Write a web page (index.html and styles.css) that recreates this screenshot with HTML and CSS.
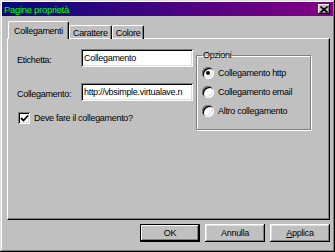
FILE: index.html
```html
<!DOCTYPE html>
<html lang="it">
	<head>
		<title>Pagine proprietà</title>
		<link rel="stylesheet" href="styles.css">
	</head>
	<body>
		<div class="window">
			<div class="titlebar">
				<span class="title">Pagine proprietà</span>
				<span class="close">
					<svg width="8" height="7" viewBox="0 0 8 7"><path d="M0.5 0.5 L7.5 6.5 M7.5 0.5 L0.5 6.5" stroke="#000" stroke-width="1.6" fill="none"/></svg>
				</span>
			</div>
			<div class="content">
				<div class="tabs">
					<div class="tab active">Collegamenti</div>
					<div class="tab">Carattere</div>
					<div class="tab">Colore</div>
				</div>
				<div class="panel">
					<div class="fields">
						<div class="row">
							<label>Etichetta:</label>
							<div class="input">Collegamento</div>
						</div>
						<div class="row">
							<label>Collegamento:</label>
							<div class="input">http://vbsimple.virtualave.n</div>
						</div>
						<div class="check">
							<span class="box">
								<svg width="9" height="9" viewBox="0 0 9 9"><path d="M1 4 L3.5 6.5 L8 1.5" stroke="#000" stroke-width="1.8" fill="none"/></svg>
							</span>
							Deve fare il collegamento?
						</div>
					</div>
					<fieldset class="group">
						<legend>Opzioni</legend>
						<div class="radio"><span class="dot on"></span>Collegamento http</div>
						<div class="radio"><span class="dot"></span>Collegamento email</div>
						<div class="radio"><span class="dot"></span>Altro collegamento</div>
					</fieldset>
				</div>
				<div class="buttons">
					<button class="default">OK</button>
					<button>Annulla</button>
					<button><u>A</u>pplica</button>
				</div>
			</div>
		</div>
	</body>
</html>
```

FILE: styles.css
```css
body {
	margin: 0;
	font-family: "Liberation Sans", Arial, sans-serif;
	font-size: 9px;
	letter-spacing: -0.3px;
	color: #000;
}
.window {
	width: 335px;
	height: 252px;
	box-sizing: border-box;
	padding: 2px;
	background: #c0c0c0;
	box-shadow: inset -1px -1px #000, inset 1px 1px #dfdfdf, inset -2px -2px #808080, inset 2px 2px #fff;
}
.titlebar {
	height: 14px;
	display: flex;
	align-items: center;
	justify-content: space-between;
	padding: 0 3px 0 2px;
	background: linear-gradient(to right, #08087c, #840084);
}
.title {
	color: #00ff00;
	font-size: 9.5px;
}
.close {
	width: 12px;
	height: 10px;
	display: flex;
	align-items: center;
	justify-content: center;
	background: #c0c0c0;
	box-shadow: inset -1px -1px #000, inset 1px 1px #fff, inset -2px -2px #808080;
}
.content {
	padding: 6px 3px 0 5px;
}
.tabs {
	display: flex;
	align-items: flex-end;
	height: 17px;
	padding-left: 1px;
	position: relative;
	z-index: 1;
	margin-bottom: -1px;
}
.tab {
	height: 13px;
	line-height: 14px;
	padding: 0 3px;
	border: 1px solid #fff;
	border-bottom: none;
	border-right-color: #000;
	border-radius: 2px 2px 0 0;
	box-shadow: inset -1px 0 #808080;
}
.tab.active {
	height: 17px;
	line-height: 18px;
	padding: 0 5px;
	background: #c0c0c0;
}
.panel {
	height: 182px;
	box-sizing: border-box;
	display: flex;
	align-items: flex-start;
	gap: 3px;
	padding: 8px 0 0 9px;
	border: 1px solid #fff;
	border-right-color: #000;
	border-bottom-color: #000;
	box-shadow: inset -1px -1px #808080;
}
.fields {
	width: 176px;
	padding-top: 2px;
}
.row {
	display: flex;
	align-items: flex-start;
	margin-bottom: 16px;
}
.row label {
	width: 64px;
	padding-top: 6px;
}
.input {
	width: 112px;
	height: 18px;
	box-sizing: border-box;
	padding: 4px 3px 0;
	background: #fff;
	white-space: nowrap;
	overflow: hidden;
	box-shadow: inset 1px 1px #808080, inset -1px -1px #fff, inset 2px 2px #000, inset -2px -2px #dfdfdf;
}
.check {
	display: flex;
	align-items: center;
	gap: 4px;
	margin-top: -5px;
	padding-left: 1px;
}
.box {
	width: 12px;
	height: 12px;
	display: flex;
	align-items: center;
	justify-content: center;
	background: #fff;
	box-shadow: inset 1px 1px #808080, inset -1px -1px #fff, inset 2px 2px #000, inset -2px -2px #dfdfdf;
}
.group {
	width: 115px;
	box-sizing: border-box;
	margin: 2px 0 0;
	padding: 2px 0 9px 5px;
	border: 1px solid #808080;
	box-shadow: 1px 1px #fff, inset 1px 1px #fff;
}
.group legend {
	padding: 0 1px;
	margin-left: 0;
	line-height: 12px;
}
.radio {
	display: flex;
	align-items: center;
	gap: 4px;
	height: 19px;
}
.dot {
	width: 12px;
	height: 12px;
	box-sizing: border-box;
	border-radius: 50%;
	background: #fff;
	display: flex;
	align-items: center;
	justify-content: center;
	box-shadow: inset 1px 1px #808080, inset -1px -1px #fff, inset 2px 2px #000, inset -2px -2px #dfdfdf;
}
.dot.on::after {
	content: "";
	width: 4px;
	height: 4px;
	border-radius: 50%;
	background: #000;
}
.buttons {
	display: flex;
	justify-content: flex-end;
	gap: 5px;
	margin-top: 4px;
}
button {
	width: 60px;
	height: 18px;
	padding: 0;
	border: none;
	font: inherit;
	letter-spacing: inherit;
	color: #000;
	background: #c0c0c0;
	box-shadow: inset -1px -1px #000, inset 1px 1px #fff, inset -2px -2px #808080, inset 2px 2px #dfdfdf;
}
button.default {
	box-shadow: inset -1px -1px #000, inset 1px 1px #000, inset -2px -2px #000, inset 2px 2px #fff, inset -3px -3px #808080;
}
```
